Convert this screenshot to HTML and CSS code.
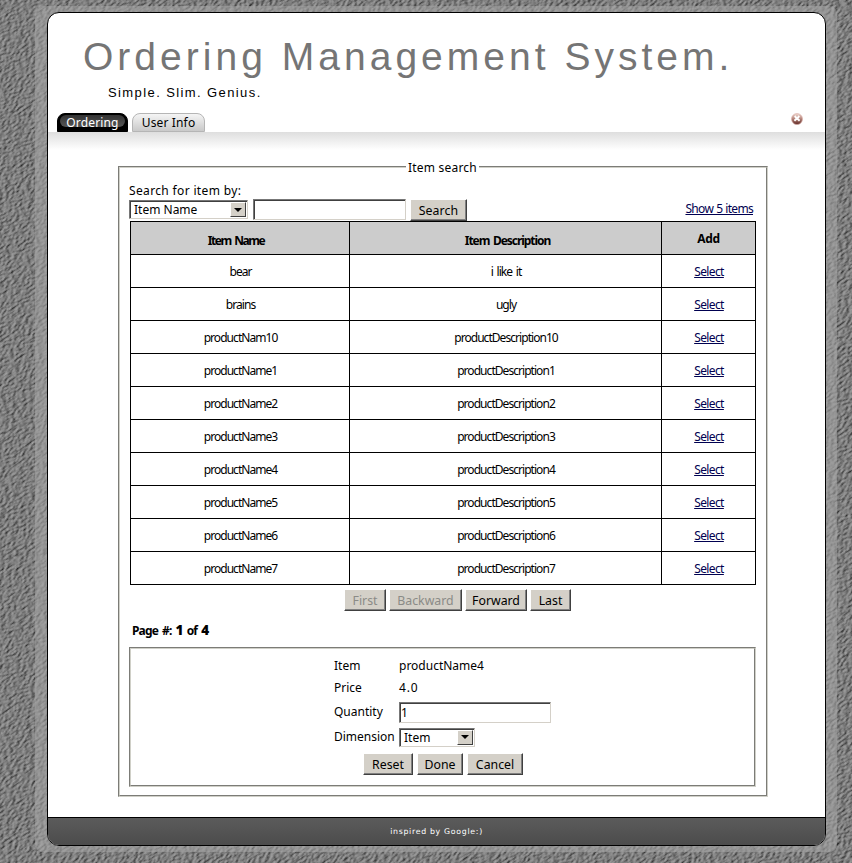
FILE: index.html
```html
<!DOCTYPE html>
<html lang="en">
<head>
<meta charset="utf-8">
<title>Ordering Management System</title>
<link rel="stylesheet" href="styles.css">
</head>
<body>
<svg class="texture" width="852" height="863" aria-hidden="true">
  <filter id="stone" x="0" y="0" width="100%" height="100%" color-interpolation-filters="sRGB">
    <feTurbulence type="fractalNoise" baseFrequency="0.22 0.5" numOctaves="3" seed="4" result="n"/>
    <feDiffuseLighting in="n" surfaceScale="1.7" diffuseConstant="0.86" lighting-color="#bdbdbd">
      <feDistantLight azimuth="235" elevation="52"/>
    </feDiffuseLighting>
  </filter>
  <g transform="rotate(-35 426 431)"><rect x="-250" y="-250" width="1400" height="1400" filter="url(#stone)"/></g>
</svg>
<div class="halo">
<div class="panel">
  <header class="header">
    <h1 class="title">Ordering Management System.</h1>
    <p class="tagline">Simple. Slim. Genius.</p>
    <nav class="tabs">
      <a class="tab active"><span>Ordering</span></a>
      <a class="tab"><span>User Info</span></a>
      <svg class="close" width="12" height="12" viewBox="0 0 12 12">
        <defs><linearGradient id="ball" x1="0" y1="0" x2="0" y2="1"><stop offset="0" stop-color="#f3ddd5"/><stop offset=".45" stop-color="#b98a80"/><stop offset="1" stop-color="#5c2420"/></linearGradient></defs>
        <circle cx="6" cy="6" r="5.5" fill="url(#ball)" stroke="#d7aaa2" stroke-width=".6"/>
        <path d="M3.7 3 6 5.6 8.3 3M3.4 7.8 6 5.4 8.6 7.8" stroke="#fff" stroke-width="1.9" fill="none"/>
      </svg>
    </nav>
  </header>
  <main class="content">
    <section class="box search">
      <span class="legend">Item search</span>
      <div class="label">Search for item by:</div>
      <div class="searchbar">
        <div class="select name"><span>Item Name</span><i></i></div>
        <div class="input query"></div>
        <button class="btn find">Search</button>
        <a class="show">Show 5 items</a>
      </div>
      <table class="items">
        <colgroup><col class="c1"><col class="c2"><col class="c3"></colgroup>
        <thead><tr><th>Item Name</th><th>Item Description</th><th class="add">Add</th></tr></thead>
        <tbody>
        <tr><td>bear</td><td>i like it</td><td><a>Select</a></td></tr>
        <tr><td>brains</td><td>ugly</td><td><a>Select</a></td></tr>
        <tr><td>productNam10</td><td>productDescription10</td><td><a>Select</a></td></tr>
        <tr><td>productName1</td><td>productDescription1</td><td><a>Select</a></td></tr>
        <tr><td>productName2</td><td>productDescription2</td><td><a>Select</a></td></tr>
        <tr><td>productName3</td><td>productDescription3</td><td><a>Select</a></td></tr>
        <tr><td>productName4</td><td>productDescription4</td><td><a>Select</a></td></tr>
        <tr><td>productName5</td><td>productDescription5</td><td><a>Select</a></td></tr>
        <tr><td>productName6</td><td>productDescription6</td><td><a>Select</a></td></tr>
        <tr><td>productName7</td><td>productDescription7</td><td><a>Select</a></td></tr>
        </tbody>
      </table>
      <div class="pager">
        <button class="btn first" disabled>First</button>
        <button class="btn back" disabled>Backward</button>
        <button class="btn fwd">Forward</button>
        <button class="btn last">Last</button>
      </div>
      <div class="page">Page #: <b>1</b> of <b>4</b></div>
      <div class="box detail">
        <div class="form">
          <span>Item</span><span>productName4</span>
          <span>Price</span><span class="price">4.0</span>
          <span>Quantity</span><div class="input qty">1</div>
          <span>Dimension</span><div class="select dim"><span>Item</span><i></i></div>
        </div>
        <div class="actions">
          <button class="btn reset">Reset</button>
          <button class="btn done">Done</button>
          <button class="btn cancel">Cancel</button>
        </div>
      </div>
    </section>
  </main>
  <footer class="footer">inspired by Google:)</footer>
</div>
</div>
</body>
</html>
```

FILE: styles.css
```css
* { box-sizing: border-box; }
html, body { margin: 0; height: 863px; overflow: hidden; }
body {
  background: #7b7b7b;
  font: 12px/16px "Noto Sans", sans-serif;
  color: #000;
  padding: 6px 0 0 35px;
}
.texture { position: absolute; inset: 0; z-index: -1; }
.halo {
  width: 802px;
  height: 846px;
  padding: 6px 11px 6px 12px;
  border-radius: 8px;
  background: rgba(165, 165, 165, .55);
}
.panel {
  display: flex;
  flex-direction: column;
  width: 779px;
  height: 834px;
  border: 1px solid #000;
  border-radius: 12px;
  background: #fff;
  overflow: hidden;
}
.header { flex: none; height: 119px; padding-top: 21px; display: flex; flex-direction: column; }
.title {
  margin: 0 0 0 35px;
  font: 39px/46px "Liberation Sans", sans-serif;
  letter-spacing: 4.02px;
  color: #757575;
  white-space: nowrap;
}
.tagline {
  margin: 5px 0 0 60px;
  font: 13px/16px "Liberation Sans", sans-serif;
  letter-spacing: 1.4px;
}
.tabs { display: flex; align-items: flex-end; gap: 4px; margin: auto 0 0 9px; }
.tab {
  height: 19px;
  width: 73px;
  border: 1px solid #b5b5b5;
  border-radius: 8px 8px 0 0;
  background: linear-gradient(#f5f5f5, #c9c9c9);
  text-align: center;
  line-height: 18px;
  letter-spacing: .15px;
  white-space: nowrap;
}
.tab.active {
  width: 71px;
  color: #fff;
  border: 1px solid #000;
  background: #000;
  position: relative;
}
.tab.active::before {
  content: "";
  position: absolute;
  inset: 1px 2px 4px;
  border-radius: 6px;
  background: linear-gradient(#333, #555);
}
.tab span { position: relative; }
.close { margin: 0 22px 7px auto; }
.content {
  flex: none;
  height: 685px;
  padding: 34px 0 0 70px;
  background: linear-gradient(#dedede, #fff 18px);
}
.box { border: 2px groove #d4d0c8; border-color: #d0d0c8; }
.search { width: 650px; height: 631px; padding: 0 9px; position: relative; }
.legend {
  position: absolute;
  top: -8px;
  left: 286px;
  width: 73px;
  text-align: center;
  background: #fff;
  letter-spacing: .2px;
  white-space: nowrap;
}
.label { margin-top: 15px; height: 16px; letter-spacing: .35px; }
.searchbar { display: flex; height: 22px; align-items: flex-start; }
.select, .input {
  border: 1px solid;
  border-color: #777 #d4d0c8 #d4d0c8 #777;
  box-shadow: inset 1px 1px #404040;
  background: #fff;
}
.select { display: flex; justify-content: space-between; padding: 1px; }
.select span { padding-left: 3px; line-height: 16px; }
.select i {
  width: 16px;
  background: #d4d0c8;
  border: 1px solid;
  border-color: #fff #404040 #404040 #fff;
  display: flex;
  align-items: center;
  justify-content: center;
}
.select i::before { content: ""; border: 4px solid transparent; border-top-color: #000; border-bottom: 0; }
.name { width: 119px; height: 19px; margin-top: 1px; }
.query { width: 153px; height: 21px; margin: 0 0 0 5px; }
.btn {
  height: 22px;
  padding: 2px 0 0;
  font: 12.3px/18px "Noto Sans", sans-serif;
  color: #000;
  background: #d4d0c8;
  border: 1px solid;
  border-color: #fff #404040 #404040 #fff;
  box-shadow: inset -1px -1px #808080;
  white-space: nowrap;
}
.btn:disabled { color: #8b8b87; }
.find { width: 57px; margin-left: 4px; letter-spacing: .1px; }
.show { margin: 2px 4px 0 auto; color: #000050; text-decoration: underline; letter-spacing: -.7px; word-spacing: .6px; }
.items {
  width: 626px;
  margin: 0 0 0 1px;
  table-layout: fixed;
  border-collapse: collapse;
  letter-spacing: -.95px;
  text-align: center;
}
.c1 { width: 219px; }
.c2 { width: 312px; }
.items tr { height: 33px; }
.items th, .items td { border: 1px solid #000; padding: 2px 0 0; }
.items td:first-child, .items td:nth-child(2) { padding-left: 1px; word-spacing: 1.5px; }
.items th { background: #ccc; padding: 6px 0 0; }
.items th:first-child { letter-spacing: -1.45px; word-spacing: 2px; padding-right: 8px; }
.items th:nth-child(2) { letter-spacing: -1.05px; word-spacing: 1.5px; padding-left: 4px; }
.items th.add { letter-spacing: -.4px; padding-top: 2px; }
.items td:last-child { letter-spacing: -.6px; padding-left: 1px; }
.items td:last-child a { color: #000050; text-decoration: underline; }
.pager { display: flex; gap: 3px; margin: 4px 0 0 215px; }
.first { width: 42px; }
.back { width: 73px; }
.fwd { width: 62px; }
.last { width: 41px; }
.page { margin: 11px 0 0 3px; font-weight: bold; letter-spacing: -.85px; word-spacing: 1.8px; height: 16px; }
.page b { font-size: 13.5px; }
.detail { width: 627px; height: 140px; margin-top: 9px; padding-top: 6px; }
.form {
  display: grid;
  grid-template-columns: 65px 160px;
  grid-template-rows: 22px 22px 26px 24px;
  align-items: center;
  margin-left: 203px;
}
.price { letter-spacing: .8px; }
.qty { width: 152px; height: 21px; padding-left: 1px; line-height: 20px; }
.dim { width: 76px; height: 19px; }
.actions { display: flex; gap: 4px; margin: 4px 0 0 232px; }
.actions .btn { padding-top: 1px; }
.reset { width: 50px; }
.done { width: 46px; }
.cancel { width: 56px; }
.footer {
  flex: none;
  height: 28px;
  border-top: 1px solid #000;
  background: linear-gradient(#5b5b5b, #4c4c4c);
  color: #fff;
  text-align: center;
  font: 7.8px/28px "DejaVu Sans", sans-serif;
  letter-spacing: .7px;
}
```
